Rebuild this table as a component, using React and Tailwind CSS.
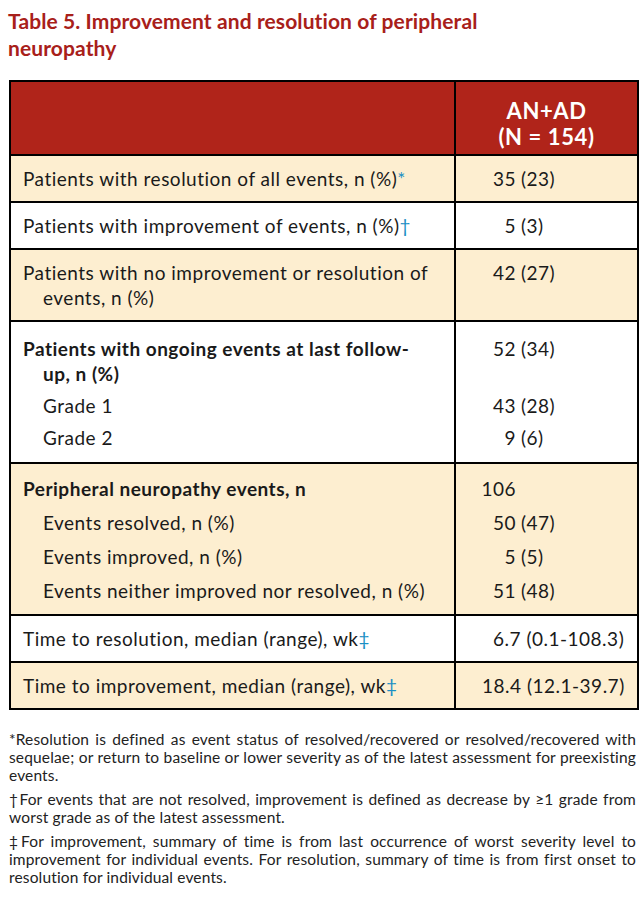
import React from "react";

const F = { fontFamily: "Lato, 'Noto Sans', sans-serif" };

function Val({ n, p, pl }) {
  if (pl !== undefined) {
    return (
      <div className="leading-[25px] whitespace-nowrap" style={{ paddingLeft: pl }}>
        {n} {p}
      </div>
    );
  }
  return (
    <div className="flex leading-[25px] whitespace-nowrap">
      <span className="w-[60px] text-right">{n}</span>
      {p ? <span className="pl-[5px]">{p}</span> : null}
    </div>
  );
}

function Row({ bg, left, right, last }) {
  return (
    <div className={`flex ${bg} ${last ? "" : "border-b-2 border-black"}`}>
      <div className="w-[445px] border-r-2 border-black pl-[12px] pr-[8px] py-[10px]">{left}</div>
      <div className="flex-1 py-[10px]">{right}</div>
    </div>
  );
}

const star = <span className="text-[#1a8fc4]">*</span>;
const dag = <span className="text-[#1a8fc4]">†</span>;
const ddag = <span className="text-[#1a8fc4]">‡</span>;

export default function App() {
  return (
    <div className="w-[642px] h-[906px] bg-white text-[#1a1a1a] overflow-hidden" style={F}>
      <h1 className="pl-[8px] pt-[7px] text-[21px] leading-[27px] font-bold text-[#a8201a] tracking-[0.1px]">
        Table 5. Improvement and resolution of peripheral
        <br />
        neuropathy
      </h1>
      <div className="mt-[19px] ml-[9px] w-[630px] border-2 border-black text-[19px] tracking-[0.5px]">
        <div className="flex h-[74px] bg-[#b0241a] border-b-2 border-black">
          <div className="w-[445px] border-r-2 border-black"></div>
          <div className="flex-1 flex flex-col justify-end items-center pb-[4px] text-white font-bold text-[22px] leading-[26px] tracking-[0.6px]">
            <div>AN+AD</div>
            <div>(N = 154)</div>
          </div>
        </div>
        <Row
          bg="bg-[#fdeed0]"
          left={<div className="leading-[25px]">Patients with resolution of all events, n (%){star}</div>}
          right={<Val n="35" p="(23)" />}
        />
        <Row
          bg="bg-white"
          left={<div className="leading-[25px]">Patients with improvement of events, n (%){dag}</div>}
          right={<Val n="5" p="(3)" />}
        />
        <Row
          bg="bg-[#fdeed0]"
          left={
            <div className="leading-[25px] pl-[20px] -indent-[20px]">
              Patients with no improvement or resolution of events, n (%)
            </div>
          }
          right={<Val n="42" p="(27)" />}
        />
        <div className="flex bg-white border-b-2 border-black">
          <div className="w-[445px] border-r-2 border-black pl-[12px] pr-[8px] pt-[14px] pb-[12px] flex flex-col gap-[7px]">
            <div className="leading-[25px] pl-[20px] -indent-[20px] font-bold">
              Patients with ongoing events at last follow-
              <br />
              up, n (%)
            </div>
            <div className="leading-[25px] pl-[20px]">Grade 1</div>
            <div className="leading-[25px] pl-[20px]">Grade 2</div>
          </div>
          <div className="flex-1 pt-[14px] pb-[12px] flex flex-col gap-[7px]">
            <div className="h-[50px]">
              <Val n="52" p="(34)" />
            </div>
            <Val n="43" p="(28)" />
            <Val n="9" p="(6)" />
          </div>
        </div>
        <div className="flex bg-[#fdeed0] border-b-2 border-black">
          <div className="w-[445px] border-r-2 border-black pl-[12px] pr-[8px] pt-[12px] pb-[11px] flex flex-col gap-[9px]">
            <div className="leading-[25px] font-bold">Peripheral neuropathy events, n</div>
            <div className="leading-[25px] pl-[20px]">Events resolved, n (%)</div>
            <div className="leading-[25px] pl-[20px]">Events improved, n (%)</div>
            <div className="leading-[25px] pl-[20px]">Events neither improved nor resolved, n (%)</div>
          </div>
          <div className="flex-1 pt-[12px] pb-[11px] flex flex-col gap-[9px]">
            <Val n="106" />
            <Val n="50" p="(47)" />
            <Val n="5" p="(5)" />
            <Val n="51" p="(48)" />
          </div>
        </div>
        <Row
          bg="bg-white"
          left={<div className="leading-[25px]">Time to resolution, median (range), wk{ddag}</div>}
          right={<Val n="6.7" p="(0.1-108.3)" pl="37px" />}
        />
        <Row
          bg="bg-[#fdeed0]"
          last
          left={<div className="leading-[25px]">Time to improvement, median (range), wk{ddag}</div>}
          right={<Val n="18.4" p="(12.1-39.7)" pl="26px" />}
        />
      </div>
      <div className="mt-[20px] pl-[9px] pr-[6px] text-[15.5px] tracking-[0.15px] leading-[18px] text-[#222] text-justify flex flex-col gap-[6px]">
        <p>
          *Resolution is defined as event status of resolved/recovered or resolved/recovered with sequelae; or return
          to baseline or lower severity as of the latest assessment for preexisting events.
        </p>
        <p>
          †For events that are not resolved, improvement is defined as decrease by ≥1 grade from worst grade as of the
          latest assessment.
        </p>
        <p>
          ‡For improvement, summary of time is from last occurrence of worst severity level to improvement for
          individual events. For resolution, summary of time is from first onset to resolution for individual events.
        </p>
      </div>
    </div>
  );
}
